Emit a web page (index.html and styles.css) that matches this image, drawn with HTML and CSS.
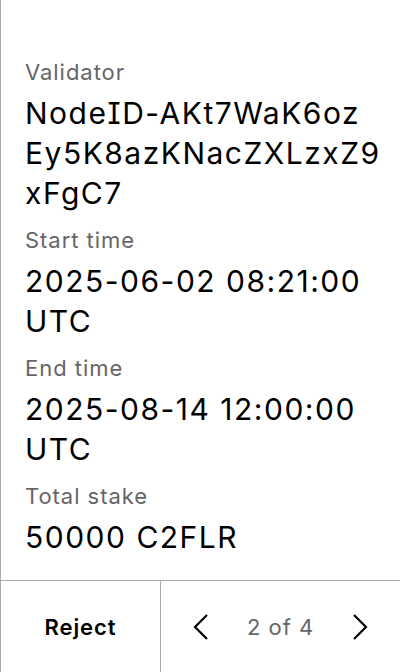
FILE: index.html
```html
<!DOCTYPE html>
<html>
<head>
<meta charset="utf-8">
<link rel="stylesheet" href="styles.css">
</head>
<body>
<div class="screen">
  <div class="details">
    <div class="field">
      <div class="label">Validator</div>
      <div class="value">NodeID-AKt7WaK6oz<br>Ey5K8azKNacZXLzxZ9<br>xFgC7</div>
    </div>
    <div class="field">
      <div class="label">Start time</div>
      <div class="value">2025-06-02 08:21:00 UTC</div>
    </div>
    <div class="field">
      <div class="label">End time</div>
      <div class="value">2025-08-14 12:00:00 UTC</div>
    </div>
    <div class="field">
      <div class="label">Total stake</div>
      <div class="value">50000 C2FLR</div>
    </div>
  </div>
  <div class="footer">
    <div class="reject">Reject</div>
    <div class="pager">
      <div class="pager-btn">
        <svg width="16" height="26" viewBox="0 0 16 26"><path d="M14 1 L2 13 L14 25" fill="none" stroke="#000" stroke-width="2.2"/></svg>
      </div>
      <div class="pager-count">2 of 4</div>
      <div class="pager-btn">
        <svg width="16" height="26" viewBox="0 0 16 26"><path d="M2 1 L14 13 L2 25" fill="none" stroke="#000" stroke-width="2.2"/></svg>
      </div>
    </div>
  </div>
</div>
</body>
</html>
```
FILE: styles.css
```css
html, body {
  margin: 0;
  padding: 0;
  background: #fff;
}
.screen {
  width: 400px;
  height: 672px;
  box-sizing: border-box;
  border-left: 1px solid #aaaaaa;
  display: flex;
  flex-direction: column;
  font-family: Inter, "Noto Sans", sans-serif;
  letter-spacing: 0.06em;
  font-feature-settings: "cv08";
}
.details {
  flex: 1;
  padding: 58px 24px 0 24px;
  display: flex;
  flex-direction: column;
  gap: 13px;
}
.field {
  display: flex;
  flex-direction: column;
  gap: 7px;
}
.label {
  font-size: 22px;
  line-height: 28px;
  color: #666666;
}
.value {
  font-size: 30px;
  line-height: 40px;
  letter-spacing: 0.05em;
  color: #000;
}
.footer {
  height: 92px;
  border-top: 1px solid #aaaaaa;
  display: flex;
  box-sizing: border-box;
}
.reject {
  width: 159px;
  border-right: 1px solid #aaaaaa;
  display: flex;
  align-items: center;
  justify-content: center;
  font-size: 22px;
  font-weight: 600;
  color: #000;
}
.pager {
  flex: 1;
  display: flex;
  align-items: center;
}
.pager-btn, .pager-count {
  flex: 1;
  display: flex;
  align-items: center;
  justify-content: center;
}
.pager-count {
  font-size: 22px;
  color: #666666;
}
```
